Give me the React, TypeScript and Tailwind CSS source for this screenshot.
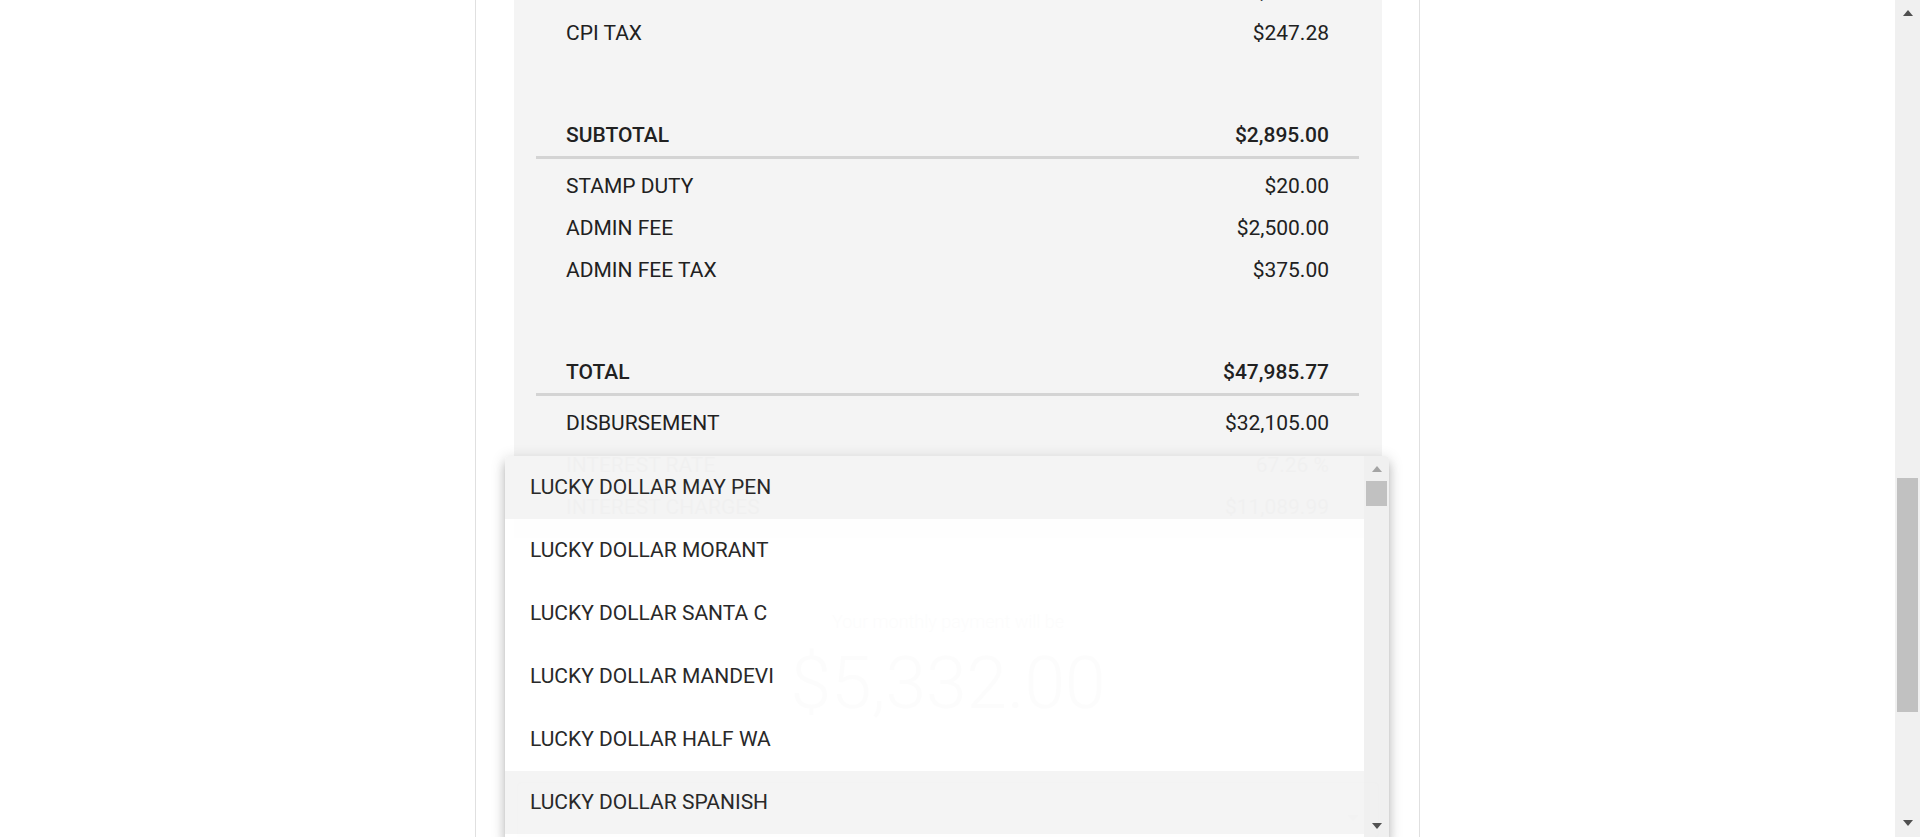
import React from "react";

type Line = { label: string; value: string };

const topRows: Line[] = [
  { label: "PROCESSING FEE", value: "$2,647.72" },
  { label: "CPI TAX", value: "$247.28" },
];

const feeRows: Line[] = [
  { label: "STAMP DUTY", value: "$20.00" },
  { label: "ADMIN FEE", value: "$2,500.00" },
  { label: "ADMIN FEE TAX", value: "$375.00" },
];

const loanRows: Line[] = [
  { label: "DISBURSEMENT", value: "$32,105.00" },
  { label: "INTEREST RATE", value: "67.26 %" },
  { label: "INTEREST CHARGES", value: "$11,089.99" },
];

const stores = [
  { name: "LUCKY DOLLAR MAY PEN", active: true },
  { name: "LUCKY DOLLAR MORANT", active: false },
  { name: "LUCKY DOLLAR SANTA C", active: false },
  { name: "LUCKY DOLLAR MANDEVI", active: false },
  { name: "LUCKY DOLLAR HALF WA", active: false },
  { name: "LUCKY DOLLAR SPANISH", active: true },
  { name: "LUCKY DOLLAR OCHO RI", active: false },
];

function Row({ label, value, bold }: Line & { bold?: boolean }) {
  return (
    <div
      className={
        "flex items-center justify-between h-[42px] px-[30px] text-[21px] leading-[42px] text-[#212121] " +
        (bold ? "font-medium" : "font-normal")
      }
    >
      <span>{label}</span>
      <span>{value}</span>
    </div>
  );
}

function Arrow({ up, color }: { up?: boolean; color: string }) {
  return (
    <svg width="10" height="6" viewBox="0 0 10 6">
      {up ? (
        <polygon points="0,6 10,6 5,0" fill={color} />
      ) : (
        <polygon points="0,0 10,0 5,6" fill={color} />
      )}
    </svg>
  );
}

export default function App() {
  return (
    <div className="flex h-[837px] w-[1920px] overflow-hidden bg-white font-['Roboto',sans-serif]">
      <div className="relative flex-1 overflow-hidden">
        <div className="mx-auto flex h-full w-[945px] flex-col border-x border-[#e0e0e0]">
          <div className="-mt-[30px] pl-[38px] pr-[37px]">
            <div className="bg-[#f4f4f4] pl-[22px] pr-[23px] pb-[10px]">
              {topRows.map((r) => (
                <Row key={r.label} {...r} />
              ))}
              <div className="h-[60px]" />
              <div className="border-b-[3px] border-[#d4d4d4]">
                <Row label="SUBTOTAL" value="$2,895.00" bold />
              </div>
              <div className="pt-[6px]">
                {feeRows.map((r) => (
                  <Row key={r.label} {...r} />
                ))}
              </div>
              <div className="h-[60px]" />
              <div className="border-b-[3px] border-[#d4d4d4]">
                <Row label="TOTAL" value="$47,985.77" bold />
              </div>
              <div className="pt-[6px]">
                {loanRows.map((r) => (
                  <Row key={r.label} {...r} />
                ))}
              </div>
            </div>

            <div className="mt-[70px] text-center text-[18px] leading-[28px] font-light text-[#616161]">
              Your monthly payment will be
            </div>
            <div className="mt-[7px] text-center text-[73px] leading-[80px] font-light text-[#424242]">
              $5,332.00
            </div>

            <div className="relative mx-[3px] mt-[59px] h-[56px] rounded-[4px] border border-[#c4c4c4] bg-[#f4f4f4]">
              <span className="absolute left-[12px] top-[2px] text-[13px] text-[#757575]">Store</span>
              <span className="absolute right-[20px] top-[32px]">
                <Arrow color="#757575" />
              </span>
            </div>
          </div>
        </div>

        {/* store dropdown */}
        <div className="absolute left-[505px] top-[456px] flex h-[383px] w-[884px] overflow-hidden rounded-[4px] bg-white opacity-[0.985] shadow-[0_5px_5px_-3px_rgba(0,0,0,0.2),0_8px_10px_1px_rgba(0,0,0,0.14),0_3px_14px_2px_rgba(0,0,0,0.12)]">
          <ul className="flex-1">
            {stores.map((s) => (
              <li
                key={s.name}
                className={
                  "flex h-[63px] items-center pl-[25px] text-[21px] text-[#262626] " +
                  (s.active ? "bg-[#f4f4f4]" : "bg-white")
                }
              >
                {s.name}
              </li>
            ))}
          </ul>
          <div className="flex w-[25px] flex-col items-center bg-[#f0f0f0]">
            <div className="mt-[10px] flex h-[6px] items-center">
              <Arrow up color="#a3a3a3" />
            </div>
            <div className="mt-[9px] h-[25px] w-[21px] bg-[#c1c1c1]" />
            <div className="flex-1" />
            <div className="mb-[10px] flex h-[6px] items-center">
              <Arrow color="#505050" />
            </div>
          </div>
        </div>
      </div>

      {/* page scrollbar */}
      <div className="flex w-[25px] flex-col items-center bg-[#f0f0f0]">
        <div className="mt-[10px] flex h-[6px] items-center">
          <Arrow up color="#505050" />
        </div>
        <div className="mt-[462px] h-[234px] w-[21px] bg-[#c1c1c1]" />
        <div className="flex-1" />
        <div className="mb-[11px] flex h-[6px] items-center">
          <Arrow color="#505050" />
        </div>
      </div>
    </div>
  );
}
